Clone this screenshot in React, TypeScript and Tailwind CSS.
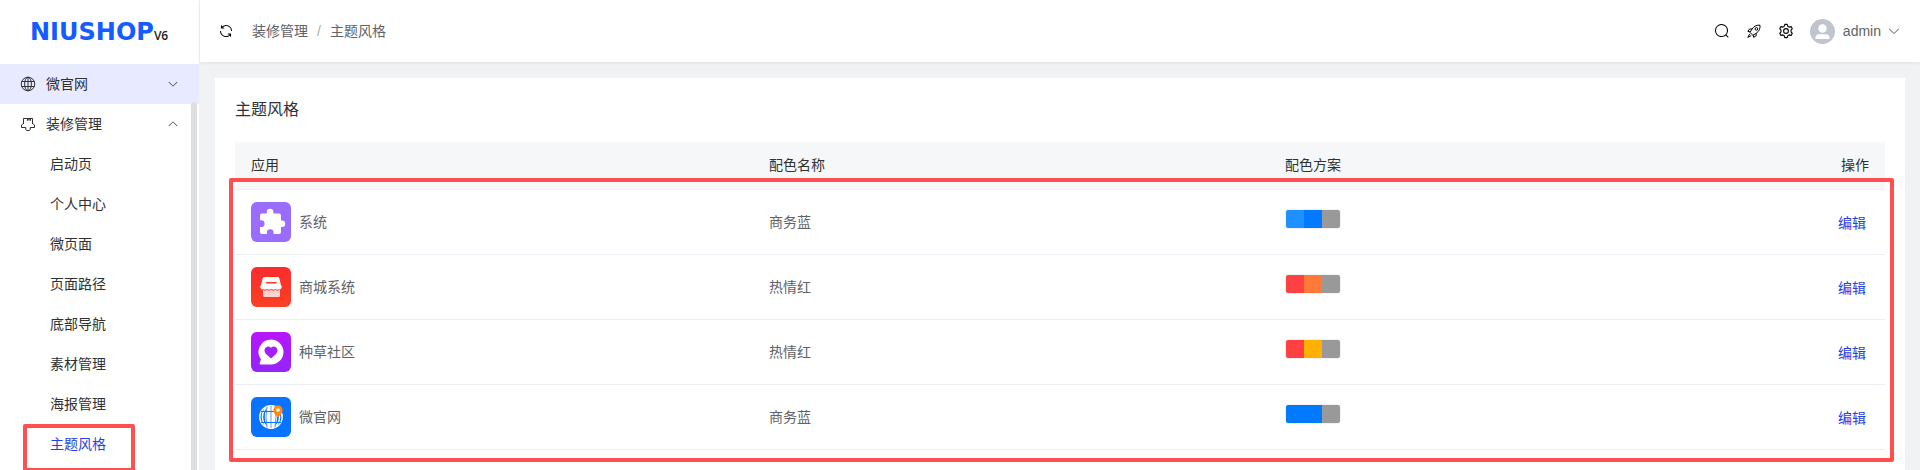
import type { ReactNode } from "react";

interface App {
  name: string;
  theme: string;
  colors: string[];
  icon: ReactNode;
}

const ARROW_DOWN =
  "M831.872 340.864 512 652.672 192.128 340.864a30.592 30.592 0 0 0-42.752 0 29.12 29.12 0 0 0 0 41.6L489.664 714.24a32 32 0 0 0 44.672 0l340.288-331.712a29.12 29.12 0 0 0 0-41.728 30.592 30.592 0 0 0-42.752 0z";

function Arrow({ className }: { className: string }) {
  return (
    <svg viewBox="0 0 1024 1024" fill="currentColor" className={className} aria-hidden="true">
      <path d={ARROW_DOWN} />
    </svg>
  );
}

function RefreshIcon() {
  return (
    <svg viewBox="0 0 1024 1024" fill="currentColor" className="size-4" aria-hidden="true">
      <path d="M771.776 794.88A384 384 0 0 1 128 512h64a320 320 0 0 0 555.712 216.448H654.72a32 32 0 1 1 0-64h149.056a32 32 0 0 1 32 32v148.928a32 32 0 1 1-64 0v-50.56zM276.288 295.616h92.992a32 32 0 0 1 0 64H220.16a32 32 0 0 1-32-32V178.56a32 32 0 0 1 64 0v50.56A384 384 0 0 1 896.128 512h-64a320 320 0 0 0-555.776-216.384z" />
    </svg>
  );
}

function GlobeIcon() {
  return (
    <svg viewBox="0 0 16 16" fill="none" stroke="currentColor" strokeWidth="1" className="size-4" aria-hidden="true">
      <circle cx="8" cy="8" r="6.800" />
      <ellipse cx="8" cy="8" rx="3.400" ry="6.800" />
      <path d="M8 1.200v13.600M1.800 5.500h12.400M1.800 10.500h12.400" />
    </svg>
  );
}

function BrushIcon() {
  return (
    <svg viewBox="0 0 16 16" fill="none" stroke="currentColor" strokeWidth="1" className="size-4" aria-hidden="true">
      <path d="M3.500 8V2.500h9V8M7.500 2.500v2l1.500-1 1.500 1v-2" />
      <path d="M3.500 7.500 1.500 9v2.500h4.300v2.300q0 .7 2.200.7t2.200-.7v-2.300h4.300V9l-2-1.500" />
    </svg>
  );
}

function SearchIcon() {
  return (
    <svg viewBox="0 0 1024 1024" fill="currentColor" className="size-4" aria-hidden="true">
      <path d="m795.904 750.72 124.992 124.928a32 32 0 0 1-45.248 45.248L750.656 795.904a416 416 0 1 1 45.248-45.248zM480 832a352 352 0 1 0 0-704 352 352 0 0 0 0 704z" />
    </svg>
  );
}

function RocketIcon() {
  return (
    <svg viewBox="0 0 16 16" fill="none" stroke="currentColor" strokeWidth="1" strokeLinejoin="round" className="size-4" aria-hidden="true">
      <path d="M14 2.200c-3.400-.3-6 .9-7.900 3.800L4 9.400l2.900 2.900 3.300-2C13.100 8.300 14.300 5.600 14 2.200z" />
      <path d="M6.100 6H3.500L1.900 8.400 4.400 8.900M10.200 10.300v2.400l-2.500 1.600-.6-2.300" />
      <circle cx="10.400" cy="5.900" r="1.300" />
      <path d="M3.700 11l-1.900 3.400L5.200 12.600" />
    </svg>
  );
}

function GearIcon() {
  return (
    <svg viewBox="0 0 16 16" fill="none" stroke="currentColor" strokeWidth="1.100" strokeLinejoin="round" className="size-4" aria-hidden="true">
      <path d="M6.800 1.400h2.400l.6 1.900 1.300.8 2-.5 1.200 2.100-1.300 1.500v1.600l1.300 1.500-1.200 2.100-2-.5-1.300.8-.6 1.900H6.800l-.6-1.900-1.300-.8-2 .5-1.200-2.100L3 8.800V7.200L1.700 5.700l1.200-2.100 2 .5 1.300-.8z" />
      <circle cx="8" cy="8" r="2.400" />
    </svg>
  );
}

function PuzzleIcon() {
  return (
    <svg viewBox="0 0 40 40" className="size-10" aria-hidden="true">
      <rect width="40" height="40" rx="6" fill="#9b6dff" />
      <path
        d="M11 11.500h4.800V10a3.300 3.300 0 0 1 6.600 0v1.500H28a2 2 0 0 1 2 2v5h.9a3.300 3.300 0 0 1 0 6.600H30V30a2 2 0 0 1-2 2h-5.500v-1.500a3.300 3.300 0 0 0-6.600 0V32H11a2 2 0 0 1-2-2v-4.900h1.200a3.400 3.400 0 0 0 0-6.800H9v-4.800a2 2 0 0 1 2-2z"
        fill="#fff"
      />
    </svg>
  );
}

function ShopIcon() {
  return (
    <svg viewBox="0 0 40 40" className="size-10" aria-hidden="true">
      <defs>
        <linearGradient id="shop" x1="0" y1="0" x2="0" y2="1">
          <stop stopColor="#fb2c2f" />
          <stop offset="1" stopColor="#fb4024" />
        </linearGradient>
      </defs>
      <rect width="40" height="40" rx="6" fill="url(#shop)" />
      <path d="M12 20h17v8.500a1.500 1.500 0 0 1-1.500 1.500h-14a1.500 1.500 0 0 1-1.500-1.500z" fill="#fed3cf" />
      <path
        d="M13.500 10h13a2 2 0 0 1 1.900 1.400l1.500 6.600a2.400 2.400 0 0 1-3.300 3.700 2.900 2.900 0 0 1-4.300.6 2.900 2.900 0 0 1-4.500 0 2.900 2.900 0 0 1-4.400-.6 2.400 2.400 0 0 1-3.300-3.700l1.500-6.600A2 2 0 0 1 13.500 10z"
        fill="#fff"
      />
      <path d="M15.500 15.800h9.500" stroke="#fb3a2c" strokeWidth="1.600" strokeLinecap="round" />
      <path d="M12 22.500q2 1.600 4 0 2 1.600 4.200 0 2.200 1.600 4.200 0 2 1.600 4 0" stroke="#fb3a2c" strokeWidth="1" fill="none" />
    </svg>
  );
}

function CommunityIcon() {
  return (
    <svg viewBox="0 0 40 40" className="size-10" aria-hidden="true">
      <defs>
        <linearGradient id="community" x1="0" y1="0" x2="0" y2="1">
          <stop stopColor="#b915ff" />
          <stop offset="1" stopColor="#9325f8" />
        </linearGradient>
      </defs>
      <rect width="40" height="40" rx="6" fill="url(#community)" />
      <path d="M20 7.500a12.500 12.500 0 1 1 0 25h-10.500a1 1 0 0 1-.8-1.400l1.300-3.600A12.500 12.500 0 0 1 20 7.500z" fill="#fff" />
      <path d="M20 26.500l-5-4.600c-4-4.200.9-9.800 5-6.100 4.100-3.700 9 1.900 5 6.100z" fill="#a41dfb" />
    </svg>
  );
}

function SiteIcon() {
  return (
    <svg viewBox="0 0 40 40" className="size-10" aria-hidden="true">
      <rect width="40" height="40" rx="6" fill="#0773ff" />
      <g fill="none" stroke="#fff" strokeWidth="1.400">
        <circle cx="20" cy="20" r="11.200" />
        <ellipse cx="20" cy="20" rx="8.600" ry="11" />
      </g>
      <ellipse cx="20" cy="20" rx="6.200" ry="11.200" fill="#fff" />
      <path d="M20 9v22M16 9.500q-2 10.500 0 21M24 9.500q2 10.500 0 21" fill="none" stroke="#0773ff" strokeWidth="0.700" />
      <path d="M10 14.500h20M10 25.500h20" stroke="#0773ff" strokeWidth="1" />
      <path d="M27 20.500c-3-2.600-4.600-5-4.600-7.400a4.600 4.600 0 0 1 9.200 0c0 2.400-1.600 4.800-4.600 7.400z" fill="#ff8a0c" />
      <circle cx="27" cy="13" r="1.800" fill="#fff" />
    </svg>
  );
}

const subMenus = ["启动页", "个人中心", "微页面", "页面路径", "底部导航", "素材管理", "海报管理", "主题风格"];

const apps: App[] = [
  { name: "系统", theme: "商务蓝", colors: ["#1e90ff", "#007aff", "#999999"], icon: <PuzzleIcon /> },
  { name: "商城系统", theme: "热情红", colors: ["#ff4142", "#ff7938", "#999999"], icon: <ShopIcon /> },
  { name: "种草社区", theme: "热情红", colors: ["#ff4142", "#ffb000", "#999999"], icon: <CommunityIcon /> },
  { name: "微官网", theme: "商务蓝", colors: ["#007aff", "#007aff", "#999999"], icon: <SiteIcon /> },
];

function Sidebar() {
  return (
    <aside className="flex w-[200px] shrink-0 flex-col border-r border-[#eef0fb] bg-white">
      <div className="flex h-16 shrink-0 items-baseline pt-4 pl-[30px]">
        <span className="font-['DejaVu_Sans',sans-serif] text-2xl font-bold text-[#155bff]">NIUSHOP</span>
        <span className="font-['Open_Sans',sans-serif] text-xs font-semibold text-[#222]">V6</span>
      </div>
      <div className="relative min-h-0 flex-1">
        <nav className="h-full overflow-hidden text-sm text-[#303133]">
          <button type="button" className="flex h-10 w-full items-center bg-[#e8ebff] px-5">
            <GlobeIcon />
            <span className="ml-2.5">微官网</span>
            <Arrow className="ml-auto size-3" />
          </button>
          <button type="button" className="flex h-10 w-full items-center px-5">
            <BrushIcon />
            <span className="ml-2.5">装修管理</span>
            <Arrow className="ml-auto size-3 rotate-180" />
          </button>
          <ul>
            {subMenus.map((label) => (
              <li key={label} className="relative">
                <a
                  href="#"
                  className={`flex h-10 items-center pl-[50px] ${label === "主题风格" ? "text-[#273de3]" : ""}`}
                >
                  {label}
                </a>
                {label === "主题风格" && (
                  <div className="pointer-events-none absolute top-0 left-[23px] h-12 w-28 rounded-[2px] border-4 border-[#ff5050]" />
                )}
              </li>
            ))}
          </ul>
        </nav>
        <div className="absolute top-[38px] right-0.5 bottom-0 w-1.5 rounded-t-full bg-[#dddee0]" />
      </div>
    </aside>
  );
}

function Header() {
  return (
    <header className="z-10 flex h-[62px] shrink-0 items-center bg-white pr-[19px] pl-[18px] text-sm text-[#606266] shadow-[0_1px_4px_rgba(0,21,41,0.08)]">
      <button type="button" aria-label="刷新" className="text-black">
        <RefreshIcon />
      </button>
      <nav className="ml-[18px] flex items-center gap-[9px]">
        <a href="#">装修管理</a>
        <span className="text-[#a8abb2]">/</span>
        <a href="#">主题风格</a>
      </nav>
      <div className="ml-auto flex items-center gap-4 text-black">
        <button type="button" aria-label="搜索">
          <SearchIcon />
        </button>
        <button type="button" aria-label="快捷入口">
          <RocketIcon />
        </button>
        <button type="button" aria-label="设置">
          <GearIcon />
        </button>
        <button type="button" className="flex items-center text-[#606266]">
          <svg viewBox="0 0 25 25" className="size-[25px]" aria-hidden="true">
            <circle cx="12.500" cy="12.500" r="12.500" fill="#c0c4cc" />
            <circle cx="12.500" cy="9.500" r="4.200" fill="#fff" />
            <path d="M5.500 20v-1.200a3.500 3.500 0 0 1 3.500-3.500h7a3.500 3.500 0 0 1 3.500 3.500V20z" fill="#fff" />
          </svg>
          <span className="ml-2">admin</span>
          <Arrow className="ml-1.5 size-3.5" />
        </button>
      </div>
    </header>
  );
}

function ThemeTable() {
  return (
    <div className="relative mt-5">
      <table className="w-full table-fixed text-left text-sm text-[#606266]">
        <thead>
          <tr className="h-[47px] border-b border-[#ebeef5] bg-[#f5f7f9] text-[#303133]">
            <th className="w-[518px] px-4 font-normal">应用</th>
            <th className="w-[516px] px-4 font-normal">配色名称</th>
            <th className="px-4 font-normal">配色方案</th>
            <th className="w-32 px-4 text-right font-normal">操作</th>
          </tr>
        </thead>
        <tbody>
          {apps.map((app) => (
            <tr key={app.name} className="h-[65px] border-b border-[#ebeef5]">
              <td className="px-4">
                <div className="flex items-center gap-2">
                  {app.icon}
                  <span>{app.name}</span>
                </div>
              </td>
              <td className="px-4">{app.theme}</td>
              <td className="px-4 pb-1.5">
                <div className="flex w-14 overflow-hidden rounded-[3px] border border-[#f2f2f2]">
                  {app.colors.map((color, i) => (
                    <span key={i} className="h-[18px] flex-1" style={{ backgroundColor: color }} />
                  ))}
                </div>
              </td>
              <td className="px-4 pt-0.5 text-right">
                <button type="button" className="mr-[3px] text-[#273de3]">
                  编辑
                </button>
              </td>
            </tr>
          ))}
        </tbody>
      </table>
      <div className="pointer-events-none absolute -inset-x-1.5 top-9 -bottom-3 -mr-[3px] rounded-[2px] border-4 border-[#ff5050]" />
    </div>
  );
}

export default function ThemeStylePage() {
  return (
    <div className="flex h-screen overflow-hidden bg-[#f0f2f4] font-['Liberation_Sans','Noto_Sans_CJK_SC',sans-serif]">
      <Sidebar />
      <div className="flex min-w-0 flex-1 flex-col">
        <Header />
        <main className="flex min-h-0 flex-1 flex-col p-[15px] pt-4 pb-0">
          <section className="min-h-0 flex-1 bg-white px-5 pt-5">
            <h1 className="text-base text-[#303133]">主题风格</h1>
            <ThemeTable />
          </section>
        </main>
      </div>
    </div>
  );
}
